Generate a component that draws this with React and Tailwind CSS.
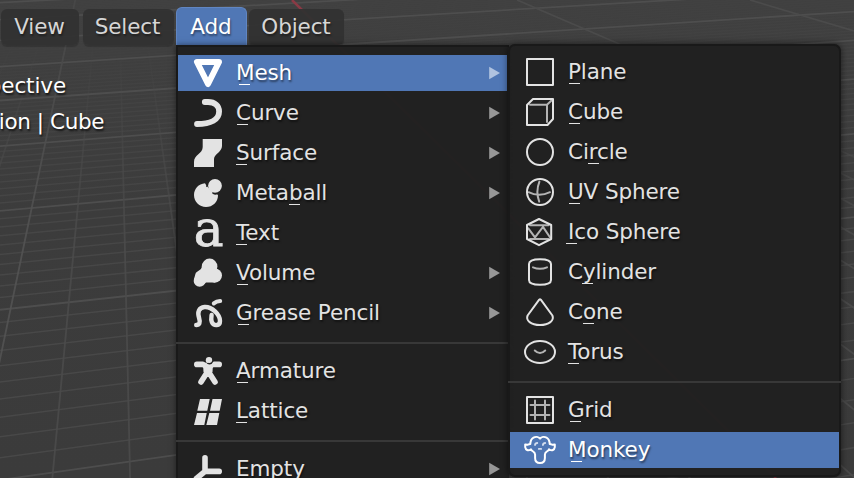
import React from "react";

const S = { fill: "none", strokeLinecap: "round", strokeLinejoin: "round" };
const DIM = "#b4b4b4";

const icons = {
  mesh: <path {...S} stroke="currentColor" strokeWidth="6" d="M5 5H27L16 27Z" />,
  curve: <path {...S} stroke="currentColor" strokeWidth="5.8" d="M12.8 5H16C23 5 27.1 9 27.1 14.5C27.1 22.5 19 27 5 27" />,
  surface: <path d="M10.7 2H30V9C30 15 22 17 22 22V30H2V25C2 17.5 10.7 17 10.7 10Z" />,
  metaball: (
    <>
      <path d="M13 6.2C6.5 6.8 2 11.8 2 18C2 24.8 7.3 30 14 30S26 24.8 26 18.4C26 17.8 25.6 17.4 25 17.5C22 18 20.5 17 19.5 15.5L15.2 12.2C14.2 10.8 14 9.6 14.2 8.3Z" />
      <circle cx="23" cy="8.8" r="6.9" />
      <path d="M15.2 9.5L20.5 15L18.5 19L11 12Z" />
    </>
  ),
  text: (
    <text x="1.8" y="29.3" fontSize="50" stroke="currentColor" strokeWidth="0.8" className="font-['DejaVu_Serif',serif] [text-shadow:none]">a</text>
  ),
  volume: (
    <>
      <circle cx="17.6" cy="9.4" r="7.8" />
      <circle cx="22.9" cy="18.6" r="7.1" />
      <circle cx="7.6" cy="23.9" r="5.9" />
      <path d="M9.9 9.5C9.6 13.5 4.6 13.6 3.4 17L1.8 23L11 28.5L14 25.6H23L26 13Z" />
    </>
  ),
  grease: (
    <>
      <path {...S} stroke="currentColor" strokeWidth="4.4" d="M4.2 28C7.5 28 8.5 25.5 7.2 21.5C5 15 7 10.5 12.5 10C20 9.5 28 17.5 28 24C28 29 22 29.5 19.8 25C18.8 22.5 19.3 20 19.6 18" />
      <path {...S} stroke="currentColor" strokeWidth="4" d="M21.8 6.4Q24.5 4.2 28.2 4" />
    </>
  ),
  armature: (
    <>
      <circle cx="17" cy="5.3" r="3.2" />
      <path {...S} stroke="currentColor" strokeWidth="5.6" d="M4.8 9.4H11L16.3 12L21 9.4H27.2M16 12V16L9 27M16 16L23 27" />
      <path d="M11 9H21L20.5 17L16 20L11.5 17Z" />
      <path {...S} stroke="#212121" strokeWidth="1.3" d="M15.8 8.4C18 9.2 20 8.2 21 6" />
    </>
  ),
  lattice: <path d="M8 4H17.7L15.3 15.7H5.3ZM20.5 4H30L27.7 15.7H18ZM5 18H14.7L12.3 30H2ZM17.3 18H27.3L25 30H14.3Z" />,
  empty: <path {...S} stroke="currentColor" strokeWidth="5.6" d="M13 4.8V18.4H27.2M13 18.4L4.5 25.5" />,
  plane: <rect {...S} x="3" y="3" width="26" height="26" strokeWidth="2" stroke="currentColor" />,
  cube: (
    <>
      <path {...S} stroke={DIM} strokeWidth="2" d="M6 8.7H23V26M23 8.7L28 4" />
      <path {...S} stroke="currentColor" strokeWidth="2" d="M3 9L9 3H29V23L23.5 29H3Z" />
    </>
  ),
  circle: <circle {...S} cx="16" cy="16" r="13" strokeWidth="2" stroke="currentColor" />,
  uv: (
    <>
      <path {...S} stroke={DIM} strokeWidth="2" d="M15.4 5.6Q11.5 15.5 15.2 25.6M4.6 16.2Q15 21.5 26 16.2" />
      <circle {...S} cx="16" cy="16" r="13" strokeWidth="2" stroke="currentColor" />
    </>
  ),
  ico: (
    <>
      <path {...S} stroke={DIM} strokeWidth="2" d="M6 9.2H24.5M6 23H24.5M4.3 12.3L11 21.3L19 10.9L26.3 21.7" />
      <path {...S} stroke="currentColor" strokeWidth="2" d="M15 3L27.2 9V23L15 29.2L3 23V9Z" />
    </>
  ),
  cylinder: (
    <>
      <path {...S} stroke={DIM} strokeWidth="2" d="M9 11.3Q16 14.2 23 11.3" />
      <path {...S} stroke="currentColor" strokeWidth="2" d="M5 8C5 4.6 9 3.2 16 3.2S27 4.6 27 8V24C27 27.4 23 28.8 16 28.8S5 27.4 5 24Z" />
    </>
  ),
  cone: <path {...S} stroke="currentColor" strokeWidth="2" d="M15.2 3.6Q16 2.8 16.8 3.6L28.4 19.5C30.5 24.5 25 29 16 29S1.5 24.5 3.6 19.5Z" />,
  torus: (
    <>
      <path {...S} stroke={DIM} strokeWidth="2" d="M10.8 14.5Q16 19.5 21.2 14.5" />
      <ellipse {...S} cx="16" cy="16" rx="15" ry="10.9" strokeWidth="2" stroke="currentColor" />
    </>
  ),
  grid: (
    <>
      <path {...S} stroke={DIM} strokeWidth="2" d="M11 6.5V25.5M21 6.5V25.5M6.5 11H25.5M6.5 21H25.5" />
      <rect {...S} x="3" y="3" width="26" height="26" strokeWidth="2" stroke="currentColor" />
    </>
  ),
  monkey: (
    <>
      <path {...S} stroke="#d3ddee" strokeWidth="1.8" d="M11 11Q11.3 9 13.3 9M18.9 11Q19.2 9 21.2 9M14.8 14.9H17.2" />
      <path {...S} stroke="currentColor" strokeWidth="2" d="M16 4.6C14.5 2.8 11.5 2.5 9.5 3.6C7.3 4.8 6.4 7 6.3 10C5 10 4.2 10.5 3.5 10.8L1.2 10.4V13.2C1.6 16 4 17.3 7 15.2C7.5 17.5 11 17.2 11.1 20.5V24C11.1 27.5 13 29 16 29S20.9 27.5 20.9 24V20.5C21 17.2 24.5 17.5 25 15.2C28 17.3 30.4 16 30.8 13.2V10.4L28.5 10.8C27.8 10.5 27 10 25.7 10C25.6 7 24.7 4.8 22.5 3.6C20.5 2.5 17.5 2.8 16 4.6Z" />
    </>
  ),
};

// bar = left edge of the accelerator letter's underline, relative to the label
const addMenu = [
  { icon: "mesh", label: "Mesh", bar: 3, sub: true, active: true },
  { icon: "curve", label: "Curve", bar: 1, sub: true },
  { icon: "surface", label: "Surface", bar: 0, sub: true },
  { icon: "metaball", label: "Metaball", bar: 53, sub: true },
  { icon: "text", label: "Text", bar: 0 },
  { icon: "volume", label: "Volume", bar: 1, sub: true },
  { icon: "grease", label: "Grease Pencil", bar: 2, sub: true },
  null,
  { icon: "armature", label: "Armature", bar: 1 },
  { icon: "lattice", label: "Lattice", bar: 0 },
  null,
  { icon: "empty", label: "Empty", bar: 2, sub: true },
];

const meshMenu = [
  { icon: "plane", label: "Plane", bar: 1 },
  { icon: "cube", label: "Cube", bar: 1 },
  { icon: "circle", label: "Circle", bar: 20 },
  { icon: "uv", label: "UV Sphere", bar: 1 },
  { icon: "ico", label: "Ico Sphere", bar: -2 },
  { icon: "cylinder", label: "Cylinder", bar: 14 },
  { icon: "cone", label: "Cone", bar: 15 },
  { icon: "torus", label: "Torus", bar: 0 },
  null,
  { icon: "grid", label: "Grid", bar: 2 },
  { icon: "monkey", label: "Monkey", bar: 3, active: true },
];

function MenuItem({ item }) {
  return (
    <div
      className={`mx-[2px] mb-1 flex h-9 shrink-0 items-center pl-[14px] pr-[7px] ${
        item.active ? "bg-[#5077b5] text-white" : "text-[#e3e3e3]"
      }`}
    >
      <svg width="32" height="32" viewBox="0 0 32 32" fill="currentColor" className="shrink-0 overflow-visible">
        {icons[item.icon]}
      </svg>
      <span className="relative ml-3 grow whitespace-nowrap tracking-[-0.12px]">
        {item.label}
        <span className="absolute bottom-[1px] h-[1.5px] w-[11px] bg-current" style={{ left: item.bar }} />
      </span>
      {item.sub && (
        <svg width="12" height="14" viewBox="0 0 12 14" className={item.active ? "text-[#b0c3e0]" : "text-[#979797]"}>
          <path fill="currentColor" d="M1.2 0.7L12 7L1.2 13.3Z" />
        </svg>
      )}
    </div>
  );
}

function Menu({ items, className }) {
  return (
    <div className={`absolute flex flex-col bg-[#202020]/97 [text-shadow:1px_2px_2px_rgba(0,0,0,0.5)] ${className}`}>
      {items.map((item, i) =>
        item ? <MenuItem key={i} item={item} /> : <div key={i} className="mb-[9px] mt-[7px] h-[2px] shrink-0 bg-[#383838]" />
      )}
    </div>
  );
}

function Viewport() {
  const across = [];
  for (let i = -9; i <= 80; i++) {
    const n = i / 10;
    const y0 = -163 + 1785.6 / (n + 2.777);
    const y1 = -167.8 + 1737.6 / (n + 2.79);
    const major = i % 10 === 0;
    across.push(
      <line key={i} x1="0" y1={y0} x2="880" y2={y0 + (y1 - y0) * 5} stroke={major ? "#505050" : "#4a4a4a"} strokeWidth={major ? 1.8 : 1.5} opacity={major ? 0.9 : Math.max(0.15, Math.min(0.9, 1.05 - n * 0.17))} />
    );
  }
  const along = [];
  for (let k = -7; k < 20; k++) {
    if (k === 10) continue;
    const x = 25 + 49.5 * k + 0.18 * k * k;
    const major = k % 10 === 0;
    along.push(
      <line key={k} x1="115" y1="-190" x2={115 + (x - 115) * 2} y2="670" stroke={major ? "url(#fadeMajor)" : "url(#fade)"} strokeWidth="1.8" opacity="0.9" />
    );
  }
  return (
    <svg width="854" height="478" viewBox="0 0 854 478" className="absolute inset-0">
      <defs>
        <linearGradient id="base" x1="0" y1="0" x2="0" y2="1">
          <stop offset="0" stopColor="#404040" />
          <stop offset="0.45" stopColor="#3c3c3c" />
          <stop offset="1" stopColor="#3b3b3b" />
        </linearGradient>
        <linearGradient id="fade" gradientUnits="userSpaceOnUse" x1="0" y1="20" x2="0" y2="240">
          <stop offset="0" stopColor="#4b4b4b" stopOpacity="0" />
          <stop offset="1" stopColor="#4b4b4b" />
        </linearGradient>
        <linearGradient id="fadeMajor" gradientUnits="userSpaceOnUse" x1="0" y1="0" x2="0" y2="240">
          <stop offset="0" stopColor="#484848" />
          <stop offset="1" stopColor="#535353" />
        </linearGradient>
      </defs>
      <rect width="854" height="478" fill="url(#base)" />
      {across}
      {along}
      <path d="M517 0L617 43L700 79M750 0L854 31" fill="none" stroke="#4b4b4b" strokeWidth="1.8" />
      <line x1="292" y1="0" x2="776" y2="478" stroke="#8a3a45" strokeWidth="2.5" />
    </svg>
  );
}

function HeaderButton({ children, className }) {
  return (
    <div className={`flex h-9 items-center justify-center rounded-md bg-[#313131]/95 text-[#d6d6d6] shadow-[0_2px_1px_rgba(0,0,0,0.18)] ${className}`}>
      {children}
    </div>
  );
}

export default function App() {
  return (
    <div className="relative h-[478px] w-[854px] overflow-hidden bg-[#3c3c3c] font-['DejaVu_Sans',sans-serif] text-[21.5px] leading-[26px]">
      <Viewport />
      <div className="relative flex items-end pl-px pt-[7px] tracking-[-0.12px] [text-shadow:1px_2px_2px_rgba(0,0,0,0.4)]">
        <HeaderButton className="w-[78px] pr-px">View</HeaderButton>
        <HeaderButton className="ml-1 w-[91px] pr-[2px]">Select</HeaderButton>
        <div className="ml-[2px] flex h-[38px] w-[71px] items-center justify-center rounded-t-md border border-b-0 border-[#6186c2] bg-[#5077b5] pr-px text-white">Add</div>
        <HeaderButton className="ml-[2px] w-[95px] pr-px">Object</HeaderButton>
      </div>
      <div className="relative mt-[28px] flex flex-col gap-[10px] text-white [text-shadow:1px_2px_2px_rgba(0,0,0,0.7)]">
        <div className="flex w-[66px] justify-end whitespace-nowrap tracking-[-0.12px]">pective</div>
        <div className="flex w-[104px] justify-end whitespace-nowrap tracking-[-0.4px]">ion | Cube</div>
      </div>
      <Menu items={addMenu} className="left-[176px] top-[45px] w-[333px] pt-[10px] shadow-[0_0_6px_rgba(0,0,0,0.5),inset_2px_2px_0_#191919]" />
      <Menu items={meshMenu} className="left-[508px] top-[44px] h-[433px] w-[333px] rounded-[7px] pt-[10px] shadow-[0_0_7px_rgba(0,0,0,0.6),inset_0_0_0_2px_#191919]" />
    </div>
  );
}
